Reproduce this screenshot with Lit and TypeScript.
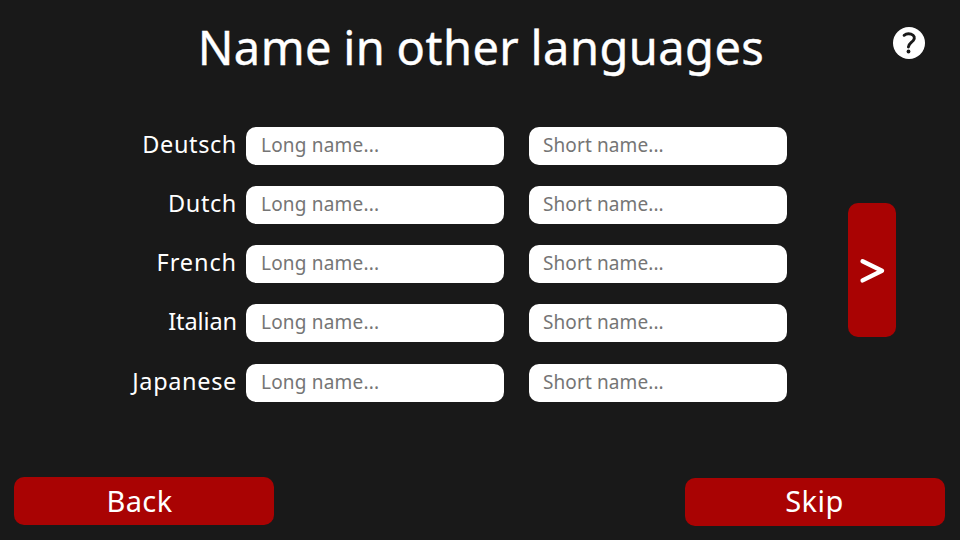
import { LitElement, html, css } from "lit";
import { customElement, property } from "lit/decorators.js";
import { styleMap } from "lit/directives/style-map.js";

@customElement("language-row")
class LanguageRow extends LitElement {
  @property() language = "";
  @property({ type: Number }) tracking = 0.4;

  static styles = css`
    :host {
      display: grid;
      grid-template-columns: 221px 258px 258px;
      column-gap: 25px;
      height: 38px;
    }
    .label {
      margin-right: -16px;
      text-align: right;
      color: #fff;
      font-size: 23.5px;
      line-height: 35px;
      white-space: nowrap;
    }
    .field {
      box-sizing: border-box;
      width: 258px;
      height: 38px;
      margin: 0;
      padding: 0 14px 2px;
      border: 0;
      border-radius: 10px;
      outline: 0;
      background: #fff;
      color: #191919;
      font: 19px "Noto Sans", sans-serif;
      letter-spacing: 0.1px;
    }
    .field::placeholder {
      color: #757575;
      opacity: 1;
    }
    .long {
      padding-left: 15px;
      letter-spacing: 0.2px;
    }
  `;

  render() {
    return html`
      <span class="label" style=${styleMap({ letterSpacing: `${this.tracking}px` })}>${this.language}</span>
      <input class="field long" placeholder="Long name..." />
      <input class="field" placeholder="Short name..." />
    `;
  }
}

@customElement("app-root")
class AppRoot extends LitElement {
  static styles = css`
    :host {
      display: flex;
      flex-direction: column;
      box-sizing: border-box;
      position: relative;
      width: 960px;
      height: 540px;
      overflow: hidden;
      background: #191919;
      color: #fff;
      font-family: "Noto Sans", sans-serif;
    }
    .title {
      margin: 0;
      padding: 15px 0 0 2px;
      height: 127px;
      box-sizing: border-box;
      text-align: center;
      font-size: 47px;
      font-weight: 400;
      line-height: 64px;
      letter-spacing: 0.45px;
      word-spacing: -1.4px;
      -webkit-text-stroke: 0.4px #fff;
    }
    .help {
      position: absolute;
      left: 893px;
      top: 27px;
      width: 32px;
      height: 32px;
    }
    .main {
      display: flex;
      height: 350px;
    }
    .rows {
      display: flex;
      flex-direction: column;
      justify-content: space-between;
      width: 848px;
      height: 274.6px;
    }
    .button {
      display: block;
      padding: 0;
      border: 0;
      border-radius: 10px;
      background: #a90303;
      color: #fff;
      font: 29px/48px "Noto Sans", sans-serif;
      text-align: center;
    }
    .next {
      display: flex;
      align-items: center;
      justify-content: center;
      width: 48px;
      height: 134px;
      margin-top: 76px;
    }
    .footer {
      display: flex;
      justify-content: space-between;
      padding: 0 15px 0 14px;
    }
    .wide {
      width: 260px;
      height: 48px;
    }
    .back {
      padding-right: 9px;
      letter-spacing: 0.4px;
    }
    .skip {
      margin-top: 1px;
      padding: 0 1px 2px 0;
      line-height: 46px;
      letter-spacing: 0.5px;
    }
  `;

  private languages: [string, number][] = [
    ["Deutsch", 0.6],
    ["Dutch", 0.6],
    ["French", 0.9],
    ["Italian", -0.1],
    ["Japanese", 0.65],
  ];

  render() {
    return html`
      <h1 class="title">Name in other languages</h1>
      <svg class="help" viewBox="0 0 32 32" aria-label="Help">
        <circle cx="16" cy="16" r="16" fill="#fff" />
        <path d="M11.1 8.3C12.8 6.9 15.6 6.4 18.1 7.1C21.5 8.1 22.1 11.2 20.4 13.3C18.7 15.4 15.4 16.7 15.4 20.1"
          fill="none" stroke="#191919" stroke-width="2.9" stroke-linecap="round" />
        <circle cx="15.5" cy="24.5" r="1.9" fill="#191919" />
      </svg>
      <div class="main">
        <div class="rows">
          ${this.languages.map(
            ([name, tracking]) => html`<language-row .language=${name} .tracking=${tracking}></language-row>`
          )}
        </div>
        <button class="button next" aria-label="Next">
          <svg width="48" height="134" viewBox="0 0 48 134">
            <path d="M14.6 58.2L34 67.8L14.6 77.4" fill="none" stroke="#fff"
              stroke-width="4.4" stroke-linecap="round" stroke-linejoin="round" />
          </svg>
        </button>
      </div>
      <div class="footer">
        <button class="button wide back">Back</button>
        <button class="button wide skip">Skip</button>
      </div>
    `;
  }
}
